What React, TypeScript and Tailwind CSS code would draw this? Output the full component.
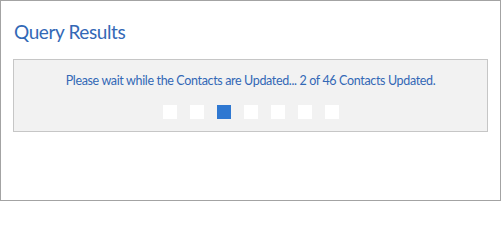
export default function App() {
  const steps = [0, 1, 2, 3, 4, 5, 6];
  const active = 2;
  return (
    <div className="w-[501px] h-[201px] border border-[#a3a3a3] bg-white font-['Lato',sans-serif]">
      <h1 className="ml-[13px] mt-[19px] text-[19px] leading-[24px] tracking-[-0.4px] text-[#3368b6]">Query Results</h1>
      <div className="ml-[12px] mt-[15px] w-[475px] h-[73px] border border-[#c6c6c6] bg-[#f2f2f2] flex flex-col items-center">
        <p className="mt-[13px] text-[12.5px] leading-[16px] tracking-[-0.35px] text-[#3368b6]">
          Please wait while the Contacts are Updated... 2 of 46 Contacts Updated.
        </p>
        <div className="mt-[16px] flex gap-[13px]">
          {steps.map((i) => (
            <span
              key={i}
              className={i === active ? "w-[14px] h-[14px] bg-[#2f78d1]" : "w-[14px] h-[14px] bg-white"}
            />
          ))}
        </div>
      </div>
    </div>
  );
}
